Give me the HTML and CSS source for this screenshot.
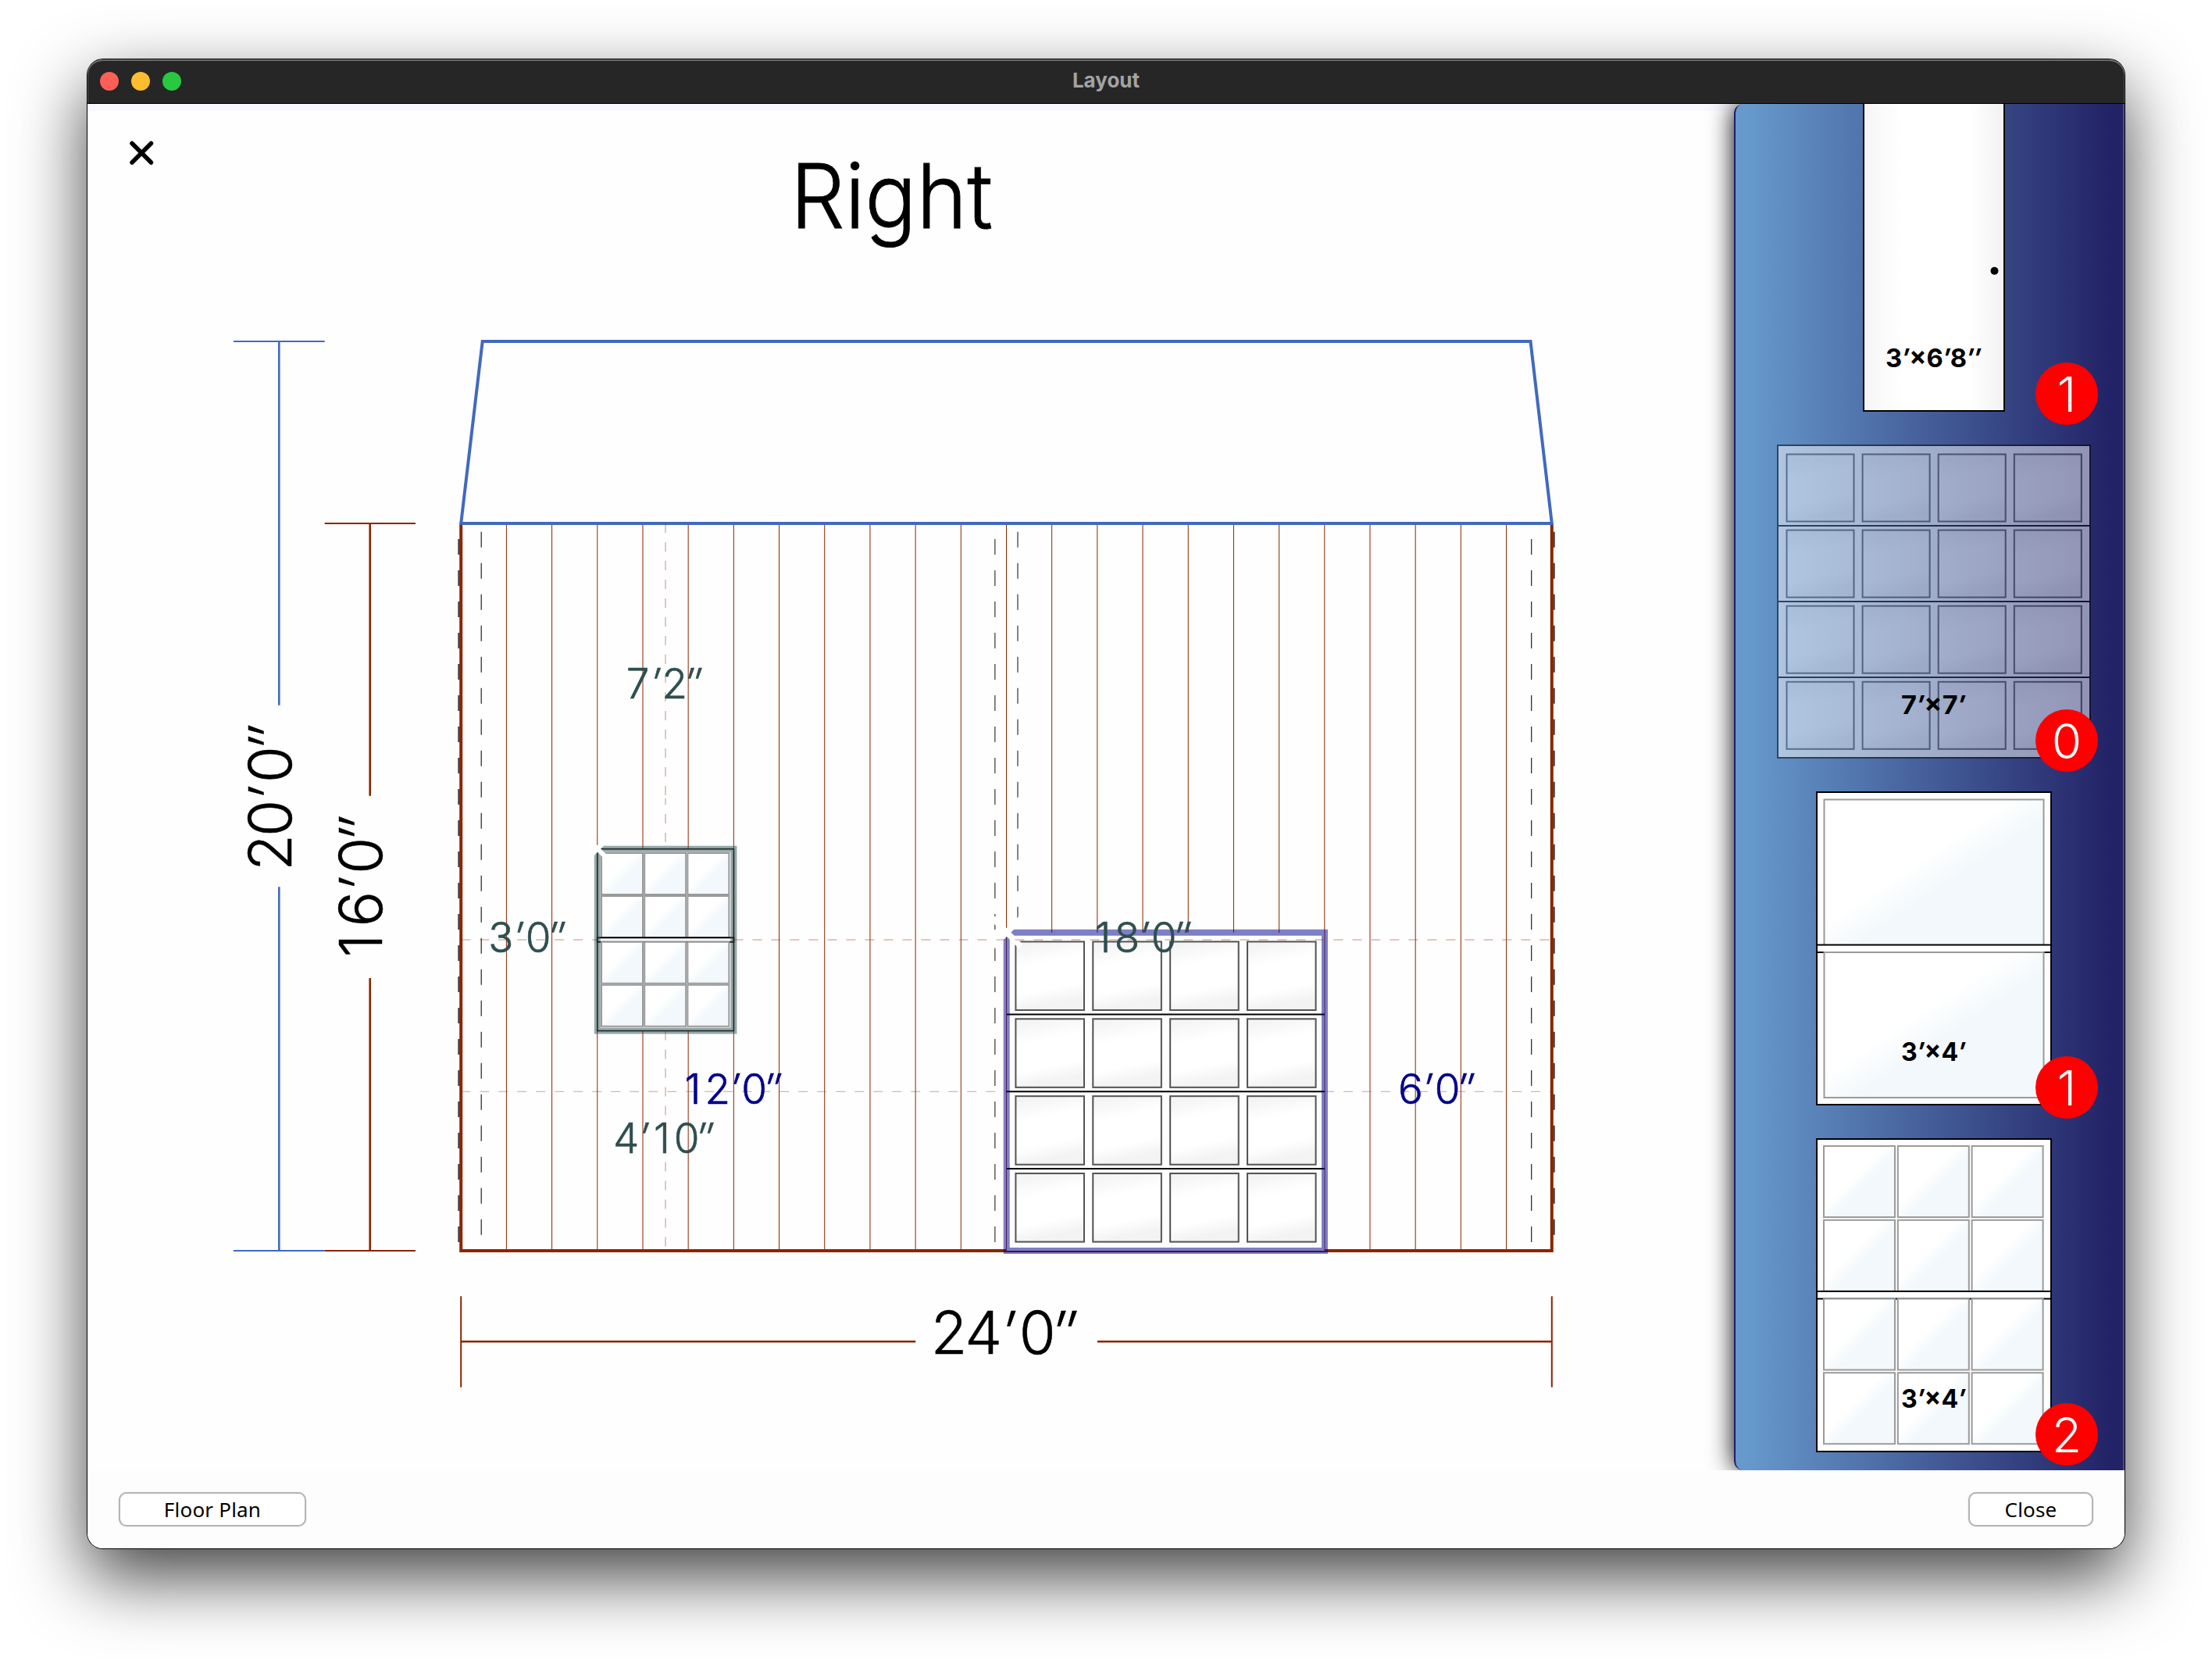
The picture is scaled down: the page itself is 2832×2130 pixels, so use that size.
FILE: index.html
```html
<!DOCTYPE html>
<html lang="en">
<head>
<meta charset="utf-8">
<title>Layout</title>
<link rel="stylesheet" href="styles.css">
</head>
<body>
<svg class="defs" width="0" height="0" aria-hidden="true">
  <defs>
    <linearGradient id="panel" x1="0.4" y1="0" x2="0.6" y2="1">
      <stop offset="0" stop-color="#f4f4f4"/><stop offset="0.3" stop-color="#fff"/>
      <stop offset="0.68" stop-color="#fff"/><stop offset="0.9" stop-color="#f3f3f3"/>
    </linearGradient>
    <linearGradient id="glass" x1="0" y1="0" x2="1" y2="1">
      <stop offset="0.42" stop-color="#fff"/><stop offset="0.58" stop-color="#f2f8fb"/>
    </linearGradient>
    <linearGradient id="door" x1="0" y1="0" x2="1" y2="0">
      <stop offset="0" stop-color="#f6f6f6"/><stop offset="0.28" stop-color="#fff"/>
      <stop offset="0.75" stop-color="#fff"/><stop offset="1" stop-color="#f2f2f2"/>
    </linearGradient>
    <g id="panel-row" class="panel">
      <rect x="11.5" width="86" height="86"/><rect x="108.6" width="86" height="86"/>
      <rect x="205.7" width="86" height="86"/><rect x="302.8" width="86" height="86"/>
    </g>
    <symbol id="garage" viewBox="0 0 400 400" overflow="visible">
      <rect width="400" height="400" fill="#fcfcfc"/>
      <use href="#panel-row" y="11.5"/><use href="#panel-row" y="108.6"/>
      <use href="#panel-row" y="205.7"/><use href="#panel-row" y="302.8"/>
      <path class="seam" d="M0 103h400M0 200h400M0 297h400"/>
    </symbol>
    <g id="pane-row" class="pane">
      <rect x="9" width="91" height="91"/><rect x="103.8" width="91" height="91"/><rect x="198.6" width="91" height="91"/>
    </g>
    <symbol id="grid-window" viewBox="0 0 300 400" overflow="visible">
      <rect width="300" height="400" fill="#fff"/>
      <use href="#pane-row" y="9"/><use href="#pane-row" y="103.8"/>
      <rect class="seam" x="0" y="195" width="300" height="9.6"/>
      <use href="#pane-row" y="204.6"/><use href="#pane-row" y="299.2"/>
    </symbol>
    <symbol id="plain-window" viewBox="0 0 300 400" overflow="visible">
      <rect width="300" height="400" fill="#fff"/>
      <rect class="pane" x="9.5" y="9.5" width="281" height="187"/>
      <rect class="seam" x="0" y="195.5" width="300" height="9.5"/>
      <rect class="pane" x="9.5" y="205" width="281" height="186"/>
    </symbol>
  </defs>
</svg>

<div class="window">
  <header class="titlebar">
    <div class="lights"><i class="light red"></i><i class="light amber"></i><i class="light green"></i></div>
    <h1 class="title">Layout</h1>
  </header>

  <main class="content">
    <svg class="canvas" viewBox="112 133 2109 1749">
      <path class="close" d="M169 183.500l24.500 24.500M193.500 183.500l-24.500 24.500"/>
      <text class="heading" x="1012" y="292" textLength="259" lengthAdjust="spacingAndGlyphs">Right</text>

      <g class="dim roof">
        <path d="M299 437h116.700M299 1601h116.700"/>
        <path class="shaft" d="M357.300 437v465.700M357.300 1135.300V1601"/>
      </g>
      <g class="dim wall">
        <path d="M415.700 670h116.300M415.700 1601h116.300M590.200 1659.300v116.400M1986.800 1659.300v116.400"/>
        <path class="shaft" d="M473.700 670v348.700M473.700 1252V1601M590.200 1717.300h582M1404.900 1717.300h582"/>
      </g>
      <text class="size" transform="translate(372.700 1109.700) rotate(-90)" x="18.200 62.400 93.500 131.200 164.500">20<tspan class="tick">′</tspan>0<tspan class="tick">″</tspan></text>
      <text class="size" transform="translate(489 1226) rotate(-90)" x="15.500 62.300 93.300 130.700 164">16<tspan class="tick">′</tspan>0<tspan class="tick">″</tspan></text>
      <text class="size" y="1732.700" x="1215 1259.200 1290.800 1328.200 1362">24<tspan class="tick">′</tspan>0<tspan class="tick">″</tspan></text>

      <path class="post edge" d="M587.500 690V1591M1989.500 680.700V1581"/>
      <path class="siding" d="M648.400 670v931m58.190-931v931m58.190-931v931m58.190-931v931m58.190-931v931m58.190-931v931m58.190-931v931m58.190-931v931m58.190-931v931m58.190-931v931m58.190-931v931m58.190-931v931m58.190-931v931m58.190-931v931m58.190-931v931m58.190-931v931m58.190-931v931m58.190-931v931m58.190-931v931m58.190-931v931m58.190-931v931m58.190-931v931m58.190-931v931"/>
      <path class="post" d="M616.200 680.700V1581M1960.700 690V1591"/>
      <path class="post middle" d="M1273.800 690V1591M1303 680.700V1193"/>
      <path class="walls" d="M590.200 670V1601H1986.800V670"/>
      <path class="gable" d="M590.200 670L617.700 437H1959.500L1986.800 670Z"/>

      <use href="#garage" x="1288.700" y="1193.700" width="407.300" height="407.300"/>
      <path class="siding inner" d="M1288.500 1193.700V1601M1695.800 1193.700V1601"/>
      <path class="sill" d="M1288 1602h408"/>
      <rect class="halo navy" x="1288.700" y="1193.700" width="407.300" height="407.300"/>
      <path class="grip" stroke-width="7.500" d="M1271 1175.500l36 36M1307 1175.500l-36 36"/>

      <use href="#grid-window" x="764.800" y="1086.700" width="174.600" height="232.800"/>
      <rect class="outline" x="764.800" y="1086.700" width="174.600" height="232.800"/>
      <rect class="halo slate" x="764.800" y="1086.700" width="174.600" height="232.800"/>
      <path class="grip" stroke-width="6" d="M753 1074.500l24 24M777 1074.500l-24 24"/>

      <g class="offset slate">
        <text y="894" x="816.700 839 863.700 887">7<tspan class="tick">′</tspan>2<tspan class="tick">″</tspan></text>
        <text y="1218.700" x="641.300 663.500 689 712">3<tspan class="tick">′</tspan>0<tspan class="tick">″</tspan></text>
        <text y="1475.700" x="801.700 824 847.500 879 902">4<tspan class="tick">′</tspan>10<tspan class="tick">″</tspan></text>
        <text y="1218.700" x="1412 1443 1464.500 1490 1513">18<tspan class="tick">′</tspan>0<tspan class="tick">″</tspan></text>
      </g>
      <g class="offset navy">
        <text y="1412.700" x="887 918.700 940.500 965.700 988.700">12<tspan class="tick">′</tspan>0<tspan class="tick">″</tspan></text>
        <text y="1412.700" x="1806 1827.500 1853 1876">6<tspan class="tick">′</tspan>0<tspan class="tick">″</tspan></text>
      </g>

      <path class="guide" d="M852 670v350M852 1319.500V1601M590.200 1203h174M939.400 1203H1986.800"/>
      <path class="guide" stroke-dashoffset="3.700" d="M852 1021.700V1083"/>
      <path class="guide fine" d="M590.200 1397.300h698M1696 1397.300h290"/>
    </svg>

    <aside class="palette">
      <div class="item">
        <svg class="picture" viewBox="0 0 400 400">
          <rect class="frame" x="110" y="0" width="180" height="400" fill="url(#door)"/>
          <circle cx="277.500" cy="220.700" r="5"/>
          <text class="label" x="199" y="344" textLength="122" lengthAdjust="spacingAndGlyphs">3<tspan class="tick">′</tspan>×6<tspan class="tick">′</tspan>8<tspan class="tick">″</tspan></text>
        </svg>
        <span class="badge">1</span>
      </div>
      <div class="item">
        <svg class="picture" viewBox="0 0 400 400">
          <g opacity="0.5"><use href="#garage" width="400" height="400"/><rect class="frame" width="400" height="400" fill="none"/></g>
          <text class="label" x="199" y="344" textLength="82" lengthAdjust="spacingAndGlyphs">7<tspan class="tick">′</tspan>×7<tspan class="tick">′</tspan></text>
        </svg>
        <span class="badge">0</span>
      </div>
      <div class="item">
        <svg class="picture" viewBox="0 0 400 400">
          <use href="#plain-window" x="50" width="300" height="400"/><rect class="frame" x="50" width="300" height="400" fill="none"/>
          <text class="label" x="199" y="344" textLength="82" lengthAdjust="spacingAndGlyphs">3<tspan class="tick">′</tspan>×4<tspan class="tick">′</tspan></text>
        </svg>
        <span class="badge">1</span>
      </div>
      <div class="item">
        <svg class="picture" viewBox="0 0 400 400">
          <use href="#grid-window" x="50" width="300" height="400"/><rect class="frame" x="50" width="300" height="400" fill="none"/>
          <text class="label" x="199" y="344" textLength="82" lengthAdjust="spacingAndGlyphs">3<tspan class="tick">′</tspan>×4<tspan class="tick">′</tspan></text>
        </svg>
        <span class="badge">2</span>
      </div>
    </aside>
  </main>

  <footer class="footer">
    <button class="button plan">Floor Plan</button>
    <button class="button">Close</button>
  </footer>
</div>
</body>
</html>
```

FILE: styles.css
```css
* { box-sizing: border-box; }
body { margin: 0; padding: 76px 112px; height: 2130px; overflow: hidden; background: #fff; font-family: Inter, "Liberation Sans", sans-serif; }
.defs { position: absolute; }

.window {
  width: 2608px; height: 1906px; display: flex; flex-direction: column;
  border-radius: 20px; background: #fefefe;
  box-shadow: 0 0 0 1px #000, 0 36px 90px rgba(0, 0, 0, .75);
}
.titlebar {
  height: 57px; display: grid; grid-template-columns: 1fr auto 1fr; align-items: center;
  padding: 0 16px; background: #262626; border-radius: 20px 20px 0 0; border-bottom: 1px solid #000;
  box-shadow: inset 0 2px 0 #6b6b6b, inset 1px 0 0 #555, inset -1px 0 0 #555;
}
.lights { display: flex; gap: 16px; }
.light { width: 24px; height: 24px; border-radius: 50%; }
.red { background: #ff5f57; }
.amber { background: #febc2e; }
.green { background: #28c840; }
.title { margin: 0 0 3px; font-size: 26px; font-weight: 700; line-height: 1; color: #a3a3a3; }

.content { height: 1749px; display: flex; overflow: hidden; background: linear-gradient(#f8f8ff 9px, #fefefe 9px); }
.canvas { width: 2109px; height: 1749px; flex: none; }
.canvas path, .canvas rect { fill: none; }
.canvas .close { stroke: #000; stroke-width: 5.5; stroke-linecap: round; }
.heading { font-size: 114.500px; font-weight: 300; stroke: #000; stroke-width: .8; }
.size { font-size: 76px; font-weight: 300; text-anchor: middle; stroke: #000; stroke-width: .5; }
.tick { font-style: italic; }
.dim { stroke-width: 2; }
.dim .shaft { stroke-width: 2.6; }
.dim.roof { stroke: #4169bf; }
.dim.wall { stroke: #8b2500; }
.siding { stroke: #8b2500; stroke-width: 1; }
.siding.inner { stroke-opacity: .6; }
.walls { stroke: #8b2500; stroke-width: 4; }
.sill { stroke: #8b2500; stroke-width: 2; }
.gable { stroke: #4169bf; stroke-width: 4; }
.post { stroke: #222; stroke-width: 1.200; stroke-dasharray: 20 20; }
.post.edge { stroke: #444; stroke-width: 2.500; }
.post.middle { stroke: #666; stroke-width: 1.600; }
.halo { stroke-width: 8; stroke-opacity: .5; }
.halo.navy { stroke: #00008b; }
.halo.slate { stroke: #2f4f4f; }
.outline { stroke: #000; stroke-width: 1.600; }
.grip { stroke: #fff; }
.offset { font-size: 53px; font-weight: 300; text-anchor: middle; stroke-width: .6; }
.offset.slate { fill: #2f4f4f; stroke: #2f4f4f; }
.offset.navy { fill: #00008b; stroke: #00008b; }
.guide { stroke: #8b2500; stroke-opacity: .25; stroke-width: 2; stroke-dasharray: 12 12; }
.guide.fine { stroke-opacity: .42; stroke-width: 1.100; }

#garage rect { fill: #fcfcfc; }
.panel rect { fill: url(#panel) !important; stroke: #555; stroke-width: 2; }
.pane rect, rect.pane { fill: url(#glass) !important; stroke: #9a9a9a; stroke-width: 2; vector-effect: non-scaling-stroke; }
.seam { stroke: #000; stroke-width: 2; fill: #fff !important; vector-effect: non-scaling-stroke; }
#garage > rect, #grid-window > rect:first-child, #plain-window > rect:first-child { fill: #fdfdfd; }

.palette {
  width: 500px; height: 1749px; flex: none; display: flex; flex-direction: column; gap: 44px;
  margin-left: -1px; padding-left: 54px; border-left: 2px solid #1f1c68; border-radius: 12px 0 0 12px;
  background: linear-gradient(90deg, #69c 3%, #226 97%);
  box-shadow: 0 0 32px #000, inset -2px 0 0 rgba(255, 255, 255, .2);
}
.item { position: relative; width: 400px; height: 400px; flex: none; }
.item:first-child { margin-top: -7px; }
.picture { display: block; width: 400px; height: 400px; overflow: visible; }
.frame { stroke: #000; stroke-width: 2; }
.label { font-size: 33px; font-weight: 700; text-anchor: middle; }
.badge {
  position: absolute; left: 330px; top: 338px; width: 80px; height: 80px; border-radius: 50%;
  background: #f00; color: #fff; font-size: 62px; font-weight: 300; line-height: 82px; text-align: center;
}

.footer { height: 100px; display: flex; justify-content: space-between; align-items: flex-start; padding: 28px 40px; background: #fdfdfd; border-radius: 0 0 20px 20px; }
.button {
  width: 160px; height: 44px; padding: 0; border: 2px solid #b4b4b4; border-radius: 10px; background: #fff;
  font-family: "Noto Sans", "Open Sans", sans-serif; font-size: 26px; line-height: 40px; letter-spacing: .2px; color: #000;
  box-shadow: 0 0 2px rgba(0, 0, 0, .15);
}
.button.plan { width: 240px; }
```
